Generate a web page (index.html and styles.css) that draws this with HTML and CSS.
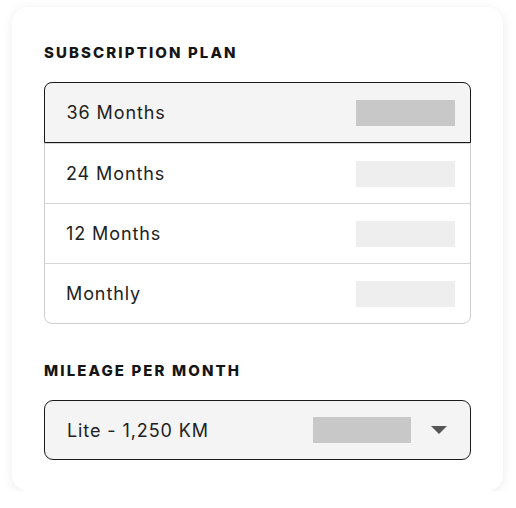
FILE: index.html
```html
<!DOCTYPE html>
<html lang="en">
<head>
    <meta charset="UTF-8">
    <meta name="viewport" content="width=device-width, initial-scale=1.0">
    <title>Subscription</title>
    <link rel="stylesheet" href="styles.css">
</head>
<body>
    <div class="card">
        <h3 class="section-title">SUBSCRIPTION PLAN</h3>
        <ul class="plan-list">
            <li class="plan selected"><span>36 Months</span><span class="price"></span></li>
            <li class="plan"><span>24 Months</span><span class="price"></span></li>
            <li class="plan"><span>12 Months</span><span class="price"></span></li>
            <li class="plan"><span>Monthly</span><span class="price"></span></li>
        </ul>
        <h3 class="section-title">MILEAGE PER MONTH</h3>
        <div class="select-box">
            <span>Lite - 1,250 KM</span>
            <span class="price"></span>
            <svg class="caret" width="16" height="8" viewBox="0 0 16 8"><path d="M0 0 L16 0 L8 8 Z" fill="#555"/></svg>
        </div>
    </div>
</body>
</html>
```

FILE: styles.css
```css
body {
    margin: 0;
    background: #fff;
    font-family: Inter, "Liberation Sans", sans-serif;
    color: #222;
}
.card {
    margin: 7px 0 0 12px;
    width: 491px;
    height: 484px;
    box-sizing: border-box;
    padding: 37px 32px 0 32px;
    background: #fff;
    border-radius: 16px;
    box-shadow: 0 2px 12px rgba(0, 0, 0, 0.08);
}
.section-title {
    margin: 0 0 20px 0;
    font-size: 15px;
    line-height: 18px;
    font-weight: 800;
    letter-spacing: 2.1px;
    color: #151515;
}
.plan-list {
    list-style: none;
    margin: 0 0 38px 0;
    padding: 0;
    border: 1px solid #cfcfcf;
    border-radius: 8px;
}
.plan {
    height: 60px;
    box-sizing: border-box;
    display: flex;
    justify-content: space-between;
    align-items: center;
    padding: 0 15px 0 21px;
    font-size: 18px;
    letter-spacing: 0.9px;
    border-top: 1px solid #d6d6d6;
}
.plan:first-child {
    border-top: none;
}
.plan.selected {
    margin: -1px -1px 0 -1px;
    height: 61px;
    padding: 0 15.5px 0 21.5px;
    border: 1.5px solid #1a1a1a;
    border-radius: 8px 8px 0 0;
    background: #f4f4f4;
}
.plan .price {
    width: 99px;
    height: 26px;
    background: #eeeeee;
}
.plan.selected .price {
    background: #c8c8c8;
}
.select-box {
    height: 60px;
    box-sizing: border-box;
    display: flex;
    align-items: center;
    padding: 0 23px 0 22px;
    border: 1.5px solid #1a1a1a;
    border-radius: 9px;
    background: #f4f4f4;
    font-size: 18px;
    letter-spacing: 0.9px;
}
.select-box span:first-child {
    flex-grow: 1;
}
.select-box .price {
    width: 98px;
    height: 26px;
    background: #c8c8c8;
    margin-right: 20px;
}
```
